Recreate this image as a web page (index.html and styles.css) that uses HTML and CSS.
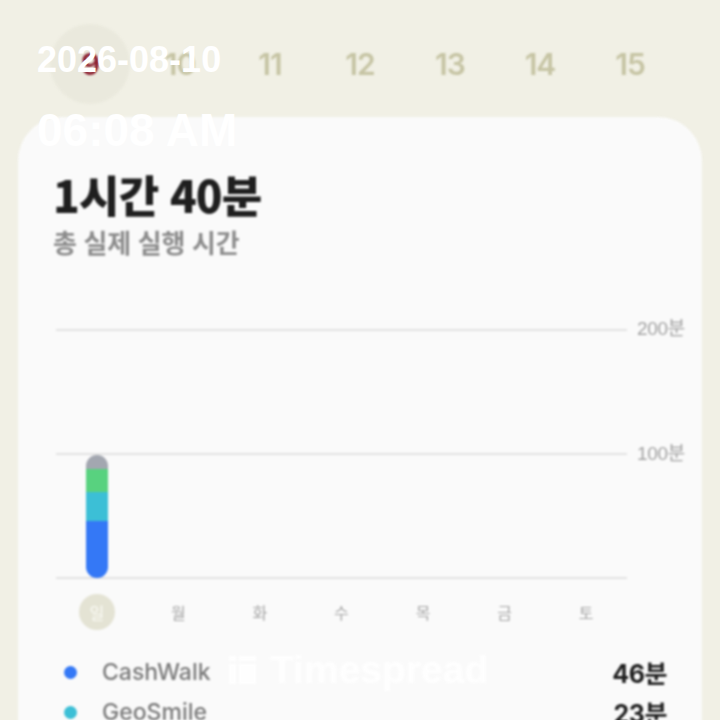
FILE: index.html
```html
<!DOCTYPE html>
<html lang="ko">
<head>
    <meta charset="UTF-8">
    <meta name="viewport" content="width=device-width, initial-scale=1.0">
    <link rel="stylesheet" href="styles.css">
    <title>Timespread</title>
</head>
<body>
    <div class="screen">
        <div class="app">
            <div class="week">
                <div class="day today">9</div>
                <div class="day">10</div>
                <div class="day">11</div>
                <div class="day">12</div>
                <div class="day">13</div>
                <div class="day">14</div>
                <div class="day">15</div>
            </div>

            <div class="card">
                <h1 class="total">1시간 40분</h1>
                <p class="caption">총 실제 실행 시간</p>

                <div class="chart">
                    <div class="plot">
                        <div class="grid-lines">
                            <div class="gridline"></div>
                            <div class="gridline"></div>
                            <div class="gridline"></div>
                        </div>
                        <div class="bars">
                            <div class="col">
                                <div class="bar">
                                    <div class="seg seg-gray" style="height: 14px"></div>
                                    <div class="seg seg-green" style="height: 23px"></div>
                                    <div class="seg seg-teal" style="height: 29px"></div>
                                    <div class="seg seg-blue" style="height: 57px"></div>
                                </div>
                            </div>
                            <div class="col"></div>
                            <div class="col"></div>
                            <div class="col"></div>
                            <div class="col"></div>
                            <div class="col"></div>
                            <div class="col"></div>
                        </div>
                    </div>
                    <div class="axis">
                        <span>200분</span>
                        <span>100분</span>
                        <span></span>
                    </div>
                </div>

                <div class="weekdays">
                    <span class="wd active">일</span>
                    <span class="wd">월</span>
                    <span class="wd">화</span>
                    <span class="wd">수</span>
                    <span class="wd">목</span>
                    <span class="wd">금</span>
                    <span class="wd">토</span>
                </div>

                <div class="legend">
                    <div class="legend-row">
                        <span class="dot seg-blue"></span>
                        <span class="name">CashWalk</span>
                        <span class="value">46분</span>
                    </div>
                    <div class="legend-row">
                        <span class="dot seg-teal"></span>
                        <span class="name">GeoSmile</span>
                        <span class="value">23분</span>
                    </div>
                </div>
            </div>
        </div>

        <!-- capture stamp + watermark sit over the app -->
        <div class="stamp">
            <div class="stamp-date">2026-08-10</div>
            <div class="stamp-time">06:08 AM</div>
        </div>
        <div class="watermark">
            <svg width="27" height="28" viewBox="0 0 27 28">
                <rect x="0" y="0" width="7" height="5" fill="#fff"/>
                <rect x="0" y="8" width="7" height="20" fill="#fff"/>
                <rect x="10" y="0" width="17" height="5" fill="#fff"/>
                <rect x="10" y="8" width="17" height="20" fill="#fff"/>
            </svg>
            <span>Timespread</span>
        </div>
    </div>
</body>
</html>
```

FILE: styles.css
```css
body {
    margin: 0;
    background-color: #f1f0e5;
    font-family: Inter, "Noto Sans CJK KR", sans-serif;
}

.screen {
    position: relative;
    width: 720px;
    height: 720px;
    overflow: hidden;
}

/* the whole screenshot is soft */
.app {
    filter: blur(0.9px);
}

.week {
    display: flex;
    padding: 24px 0 0 45px;
}

.day {
    width: 90px;
    height: 80px;
    display: flex;
    align-items: center;
    justify-content: center;
    font-size: 30px;
    font-weight: 600;
    letter-spacing: -1px;
    color: #c6c4a4;
}

.day.today {
    width: 80px;
    margin: 0 5px;
    border-radius: 50%;
    background-color: #eae9dd;
    color: #8a1c2c;
}

.card {
    margin: 13px 18px 0;
    height: 640px;
    padding: 50px 12px 0 35px;
    background-color: #fafafa;
    border-radius: 44px 44px 0 0;
}

.total {
    margin: 0;
    font-family: "Noto Sans CJK KR", sans-serif;
    font-size: 44px;
    font-weight: 900;
    line-height: 54px;
    letter-spacing: -0.8px;
    color: #1f1f1f;
}

.caption {
    margin: 4px 0 0;
    font-family: "Noto Sans CJK KR", sans-serif;
    font-size: 26px;
    font-weight: 700;
    line-height: 34px;
    letter-spacing: -0.3px;
    color: #8c8c8c;
}

.chart {
    display: grid;
    grid-template-columns: 571px auto;
    column-gap: 10px;
    margin: 70px 0 0 3px;
}

.plot {
    display: grid;
    height: 250px;
}

.grid-lines,
.bars {
    grid-area: 1 / 1;
}

.grid-lines {
    display: flex;
    flex-direction: column;
    justify-content: space-between;
}

.gridline {
    height: 2px;
    background-color: #e2e2e2;
}

.bars {
    display: grid;
    grid-template-columns: repeat(7, 1fr);
    align-items: end;
    padding-bottom: 1px;
}

.col {
    display: flex;
    justify-content: center;
}

.bar {
    width: 22px;
    border-radius: 11px;
    overflow: hidden;
    display: flex;
    flex-direction: column;
}

.seg-gray { background-color: #a3a7b0; }
.seg-green { background-color: #58d27f; }
.seg-teal { background-color: #3cbfd6; }
.seg-blue { background-color: #3478f6; }

.axis {
    display: flex;
    flex-direction: column;
    justify-content: space-between;
    height: 270px;
    margin-top: -10px;
    font-family: "Liberation Sans", "Noto Sans CJK KR", sans-serif;
    font-size: 19px;
    letter-spacing: -0.3px;
    color: #a2a2a2;
}

.axis span {
    height: 20px;
    line-height: 20px;
}

.weekdays {
    display: grid;
    grid-template-columns: repeat(7, 1fr);
    width: 571px;
    margin: 5px 0 0 3px;
}

.wd {
    justify-self: center;
    width: 36px;
    height: 36px;
    display: flex;
    align-items: center;
    justify-content: center;
    font-family: "Noto Sans CJK KR", sans-serif;
    font-size: 16px;
    color: #a6a6a6;
}

.wd.active {
    border-radius: 50%;
    background-color: #e4e3d4;
    color: #fbfbf6;
}

.legend {
    margin: 22px 23px 0 0;
}

.legend-row {
    display: flex;
    align-items: center;
    height: 40px;
}

.dot {
    width: 13px;
    height: 13px;
    border-radius: 50%;
    margin: 0 25px 0 11px;
}

.name {
    flex: 1;
    font-size: 23px;
    font-weight: 500;
    color: #7b7b7b;
}

.value {
    font-size: 25px;
    font-weight: 700;
    letter-spacing: -0.5px;
    color: #1f1f1f;
}

.stamp {
    position: absolute;
    top: 42px;
    left: 37px;
    color: #fff;
    font-family: "Liberation Sans", sans-serif;
    font-weight: 700;
    line-height: 1;
}

.stamp-date {
    font-size: 36px;
}

.stamp-time {
    margin-top: 29px;
    font-size: 46px;
}

.watermark {
    position: absolute;
    top: 648px;
    left: 229px;
    display: flex;
    align-items: center;
    gap: 14px;
    opacity: 0.9;
    filter: blur(0.8px);
    color: #fff;
    font-family: "Liberation Sans", sans-serif;
    font-size: 39px;
    font-weight: 700;
}
```
